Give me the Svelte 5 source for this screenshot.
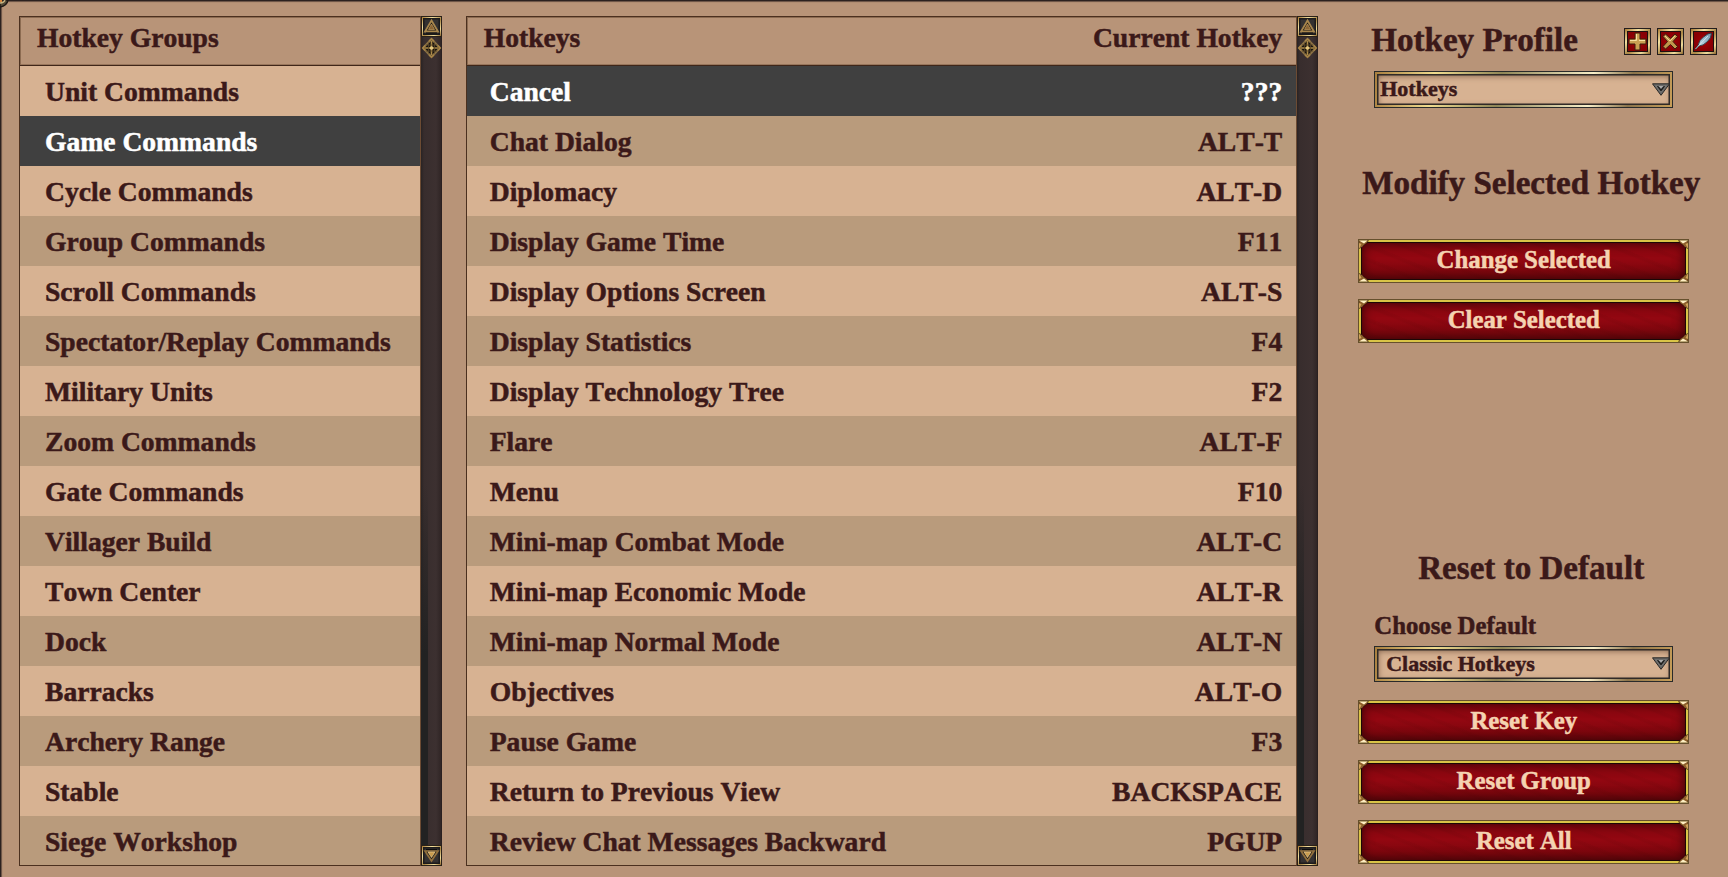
<script lang="ts">
    const groups = [
        'Unit Commands', 'Game Commands', 'Cycle Commands', 'Group Commands',
        'Scroll Commands', 'Spectator/Replay Commands', 'Military Units', 'Zoom Commands',
        'Gate Commands', 'Villager Build', 'Town Center', 'Dock',
        'Barracks', 'Archery Range', 'Stable', 'Siege Workshop'
    ];

    const hotkeys = [
        { name: 'Cancel', key: '???' },
        { name: 'Chat Dialog', key: 'ALT-T' },
        { name: 'Diplomacy', key: 'ALT-D' },
        { name: 'Display Game Time', key: 'F11' },
        { name: 'Display Options Screen', key: 'ALT-S' },
        { name: 'Display Statistics', key: 'F4' },
        { name: 'Display Technology Tree', key: 'F2' },
        { name: 'Flare', key: 'ALT-F' },
        { name: 'Menu', key: 'F10' },
        { name: 'Mini-map Combat Mode', key: 'ALT-C' },
        { name: 'Mini-map Economic Mode', key: 'ALT-R' },
        { name: 'Mini-map Normal Mode', key: 'ALT-N' },
        { name: 'Objectives', key: 'ALT-O' },
        { name: 'Pause Game', key: 'F3' },
        { name: 'Return to Previous View', key: 'BACKSPACE' },
        { name: 'Review Chat Messages Backward', key: 'PGUP' }
    ];

    let selectedGroup = $state(1);
    let selectedHotkey = $state(0);
</script>

{#snippet scrollbar()}
    <div class="scrollbar">
        <svg class="arrow" width="21" height="21" viewBox="0 0 21 21">
            <rect width="21" height="21" fill="#2a2118" />
            <rect x="1" y="1" width="19" height="19" fill="url(#gold)" />
            <rect x="2" y="2" width="17" height="17" fill="#1c1b1b" />
            <rect x="3.500" y="3.500" width="14" height="14" fill="#343131" />
            <path d="M10.500 4.500 L17 15.500 H4 Z" fill="#211b15" stroke="#a8864c" stroke-width="1.800" />
            <path d="M10.500 8 L13.500 13.500 H7.500 Z" fill="#8c6534" stroke="#c29a5c" stroke-width=".7" />
            <path d="M5 17 H16" stroke="#0d0c0c" />
        </svg>
        <svg class="thumb" width="21" height="22" viewBox="0 0 21 22">
            <path d="M10.500 2 L19 11 L10.500 20 L2 11 Z" fill="#17130f" stroke="#8b7144" stroke-width="2" />
            <path d="M10.500 4 V18 M4 11 H17" stroke="#ad8b48" stroke-width="1.600" />
            <path d="M7.500 5.500 V16.500 M13.500 5.500 V16.500 M5 8 H16 M5 14 H16" stroke="#5b4829" stroke-width=".8" />
            <path d="M8 4 L10.500 2 L13 4 M8 18 L10.500 20 L13 18 M4 8.500 L2 11 L4 13.500 M17 8.500 L19 11 L17 13.500" fill="none" stroke="#a78445" stroke-width="1.500" />
            <circle cx="10.500" cy="11" r="1.800" fill="#e3c77e" />
        </svg>
        <svg class="arrow down" width="21" height="21" viewBox="0 0 21 21">
            <rect width="21" height="21" fill="#2a2118" />
            <rect x="1" y="1" width="19" height="19" fill="url(#gold)" />
            <rect x="2" y="2" width="17" height="17" fill="#1c1b1b" />
            <rect x="3.500" y="3.500" width="14" height="14" fill="#343131" />
            <path d="M4 6 H17 L10.500 16 Z" fill="#251d15" stroke="#92703d" stroke-width="1.700" />
            <path d="M7 7 H14 L10.500 12.500 Z" fill="#c99b4d" stroke="#f0d69e" stroke-width=".6" />
            <path d="M5 4.500 H16" stroke="#0d0c0c" />
        </svg>
    </div>
{/snippet}

{#snippet iconFrame()}
    <rect width="27" height="27" fill="#231d1d" />
    <rect x="1" y="1" width="25" height="25" fill="url(#gold)" />
    <rect x="3" y="3" width="21" height="21" fill="#1c1010" />
    <rect x="4" y="4" width="19" height="19" fill="url(#ruby)" />
{/snippet}

{#snippet dropdown(label, inset)}
    <button class="dropdown" class:inset>
        <span>{label}</span>
        <svg width="18" height="13" viewBox="0 0 18 13">
            <path d="M.5 .8 H17.500 L9 12.300 Z" fill="#696969" stroke="#292827" />
            <path d="M4 2.800 H14 L9 9.200 Z" fill="#1d1d1d" stroke="#96948e" stroke-width=".6" />
            <path d="M6.500 3 H11.500 L9 6 Z" fill="#aaa" />
        </svg>
    </button>
{/snippet}

{#snippet redButton(label)}
    <button class="red-button">
        <span>{label}</span>
        {#each ['tl', 'tr', 'bl', 'br'] as corner}
            <svg class="corner {corner}" width="10" height="9" viewBox="0 0 10 9">
                <path d="M0 .5 H9.500 Q8 4 5 5 Q3.500 8 0 8.500 Z" fill="#8d5f2c" stroke="#170b05" stroke-width=".4" />
                <path d="M0 .5 H8.500 L5 3.500 Z" fill="#fff0c4" />
                <path d="M0 3 L2.500 4 L.5 8 H0 Z" fill="#cfa45b" />
            </svg>
        {/each}
    </button>
{/snippet}

<main class="screen">
    <svg class="defs" width="0" height="0">
        <defs>
            <linearGradient id="gold" x1="0" y1="0" x2="1" y2="1">
                <stop offset="0" stop-color="#a67832" />
                <stop offset=".28" stop-color="#f2dfa0" />
                <stop offset=".55" stop-color="#a88443" />
                <stop offset=".8" stop-color="#efdc9d" />
                <stop offset="1" stop-color="#8d652c" />
            </linearGradient>
            <radialGradient id="ruby">
                <stop offset="0" stop-color="#a90006" />
                <stop offset="1" stop-color="#870004" />
            </radialGradient>
            <linearGradient id="feather" x1="1" y1="0" x2="0" y2="1">
                <stop offset="0" stop-color="#6f94ab" />
                <stop offset=".55" stop-color="#a9c8da" />
                <stop offset="1" stop-color="#e1e7e8" />
            </linearGradient>
        </defs>
    </svg>
    <svg class="ornament" width="10" height="9" viewBox="0 0 10 9">
        <path d="M0 0 H8 Q7 6 0 7 Z" fill="#554b38" stroke="#211a16" stroke-width="1.500" />
        <path d="M0 3 Q4 3 5 0" fill="none" stroke="#c7b581" stroke-width="1.300" />
        <rect width="2" height="2" fill="#d9823b" />
    </svg>

    <section class="panel groups">
        <div class="list">
            <header class="list-header"><span>Hotkey Groups</span></header>
            <ul>
                {#each groups as group, i}
                    <li>
                        <button class="row" class:selected={i === selectedGroup} onclick={() => (selectedGroup = i)}>{group}</button>
                    </li>
                {/each}
            </ul>
        </div>
        {@render scrollbar()}
    </section>

    <section class="panel hotkeys">
        <div class="list">
            <header class="list-header"><span>Hotkeys</span><span>Current Hotkey</span></header>
            <ul>
                {#each hotkeys as hotkey, i}
                    <li>
                        <button class="row" class:selected={i === selectedHotkey} onclick={() => (selectedHotkey = i)}>
                            <span>{hotkey.name}</span>
                            <span>{hotkey.key}</span>
                        </button>
                    </li>
                {/each}
            </ul>
        </div>
        {@render scrollbar()}
    </section>

    <aside class="side">
        <div class="profile">
            <h2>Hotkey Profile</h2>
            <div class="profile-actions">
                <button aria-label="Add profile">
                    <svg width="27" height="27" viewBox="0 0 27 27">
                        {@render iconFrame()}
                        <path d="M11 5 H16 V11 H22 V16 H16 V22 H11 V16 H5 V11 H11 Z" fill="#c9a052" stroke="#3a1d0d" stroke-width="1" />
                        <path d="M12.500 6 V12.500 H6 M15 12.500 H21" fill="none" stroke="#f5dfa0" />
                    </svg>
                </button>
                <button aria-label="Delete profile">
                    <svg width="27" height="27" viewBox="0 0 27 27">
                        {@render iconFrame()}
                        <path d="M6 8.500 L8.500 6 L13.500 10.500 L18 6 L20.500 8.500 L16 13.500 L20.500 18.500 L18 21 L13.500 16.500 L8.500 21 L6 18.500 L10.500 13.500 Z" fill="#c1964b" stroke="#3a1d0d" />
                        <path d="M8 8 L13 13 L18 8" fill="none" stroke="#f7dfa1" stroke-width=".9" />
                    </svg>
                </button>
                <button aria-label="Rename profile">
                    <svg width="27" height="27" viewBox="0 0 27 27">
                        {@render iconFrame()}
                        <path d="M5 21.500 L8 17.500 Q9 12 14 8.500 Q18 5 21.500 5 Q21.500 10 17.500 13.500 Q13 18 9 18 Z" fill="url(#feather)" stroke="#29333b" stroke-width=".9" />
                        <path d="M5.500 21 L18 8" stroke="#d9e8ed" stroke-width=".8" />
                    </svg>
                </button>
            </div>
        </div>
        {@render dropdown('Hotkeys', false)}

        <h2 class="modify-title">Modify Selected Hotkey</h2>
        <div class="buttons">
            {@render redButton('Change Selected')}
            {@render redButton('Clear Selected')}
        </div>

        <h2 class="reset-title">Reset to Default</h2>
        <h3>Choose Default</h3>
        {@render dropdown('Classic Hotkeys', true)}
        <div class="buttons reset">
            {@render redButton('Reset Key')}
            {@render redButton('Reset Group')}
            {@render redButton('Reset All')}
        </div>
    </aside>
</main>

<style>
    :global(body) {
        margin: 0;
        overflow: hidden;
        background: #b89478;
    }
    .screen {
        box-sizing: border-box;
        position: relative;
        display: flex;
        width: 1728px;
        height: 877px;
        padding: 15px 0 0 18px;
        border-top: 1px solid #2b211f;
        border-left: 1px solid #2b211f;
        box-shadow: inset 1px 1px 1px #664f43;
        background: #b89478;
        color: #3b1919;
        font-family: "Liberation Serif", "Times New Roman", serif;
        font-size: 27.6px;
        font-weight: bold;
        font-kerning: none;
        -webkit-text-stroke: 0.5px;
    }
    .defs {
        position: absolute;
    }
    .ornament {
        position: absolute;
        top: -1px;
        left: -1px;
    }
    button {
        padding: 0;
        border: 0;
        background: none;
        color: inherit;
        font: inherit;
        font-kerning: none;
    }
    h2, h3, ul {
        margin: 0;
        padding: 0;
    }
    .panel {
        display: flex;
        height: 850px;
    }
    .groups {
        width: 423px;
        margin-right: 24px;
    }
    .hotkeys {
        width: 853px;
    }
    .list {
        box-sizing: border-box;
        flex: 1;
        height: 850px;
        border: 1px solid #4b301f;
        border-right-color: #6c4b33;
        box-shadow: inset 1px 1px 0 #8c6b51;
    }
    .list-header {
        box-sizing: border-box;
        display: flex;
        align-items: center;
        justify-content: space-between;
        height: 49px;
        padding: 0 14px 7px 17px;
        border-bottom: 1px solid #3f2619;
        box-shadow: inset 1px 1px 0 #8c6b51, inset 0 -1px 0 #98765c;
    }
    ul {
        height: 799px;
        overflow: hidden;
        list-style: none;
    }
    .row {
        box-sizing: border-box;
        display: flex;
        align-items: center;
        justify-content: space-between;
        width: 100%;
        height: 50px;
        padding: 1px 14px 0 25px;
        background: #b99b7c;
        text-align: left;
        white-space: nowrap;
    }
    .hotkeys .row {
        padding-left: 23px;
    }
    li:nth-child(odd) .row {
        background: #d7b292;
    }
    li .row.selected,
    li:nth-child(odd) .row.selected {
        background: #404040;
        color: #fff;
    }
    .scrollbar {
        display: flex;
        flex-direction: column;
        width: 21px;
        background: linear-gradient(#0000 55%, #222 75%) 0 0 / 7px 100% no-repeat, linear-gradient(90deg, #292323 0, #382d2d 3px, #3c3030 15px, #302525 20px, #241b1b);
    }
    .down {
        margin-top: auto;
    }
    .side {
        display: flex;
        flex-direction: column;
        width: 370px;
        margin-left: 40px;
    }
    .side h2 {
        font-size: 33.1px;
        line-height: 38px;
        white-space: nowrap;
    }
    .profile {
        display: flex;
        align-items: center;
        justify-content: space-between;
        height: 50px;
        padding: 0 11px 0 13px;
    }
    .profile h2 {
        margin-top: -2px;
    }
    .profile-actions {
        display: flex;
        gap: 6px;
    }
    .profile-actions button,
    .profile-actions svg {
        display: block;
    }
    .dropdown {
        box-sizing: border-box;
        display: flex;
        align-items: center;
        justify-content: space-between;
        width: 299px;
        height: 37px;
        margin: 5px 0 0 16px;
        padding: 0 0 1px 3px;
        border: 3px solid;
        border-image: linear-gradient(100deg, #a67c3c, #f0dc8f 20%, #8f8657 42%, #f8eec8 72%, #8b744c 85%, #c99f58) 3;
        outline: 1px solid #292a2a;
        outline-offset: -1px;
        box-shadow: inset 0 0 0 1.5px #302a27, inset 1px 2px 6px #80614a;
        background: #d7b292;
        font-size: 22px;
    }
    .dropdown.inset {
        height: 36px;
        margin-top: 6px;
        padding-left: 9px;
    }
    .modify-title {
        margin: 56px 0 0 4px;
    }
    .buttons {
        display: flex;
        flex-direction: column;
        gap: 16px;
        margin-top: 37px;
    }
    .red-button {
        box-sizing: border-box;
        position: relative;
        width: 331px;
        height: 44px;
        padding-bottom: 2px;
        border: 1px solid #66502d;
        background: repeating-linear-gradient(22deg, #0000 0 8px, #30000010 10px, #3000000a 13px), linear-gradient(#8b0710, #930711 45%, #6d060b);
        box-shadow: inset 0 0 0 2px #d9c447, inset 0 0 0 3px #1c0706, inset 0 0 12px 3px #320306;
        color: #f5d3b1;
        font-size: 24.8px;
    }
    .corner {
        position: absolute;
        top: 0;
        left: 0;
    }
    .tr {
        left: auto;
        right: 0;
        transform: scaleX(-1);
    }
    .bl {
        top: auto;
        bottom: 0;
        transform: scaleY(-1);
    }
    .br {
        top: auto;
        bottom: 0;
        left: auto;
        right: 0;
        transform: scale(-1);
    }
    .reset-title {
        margin: 206px 0 0 60px;
    }
    h3 {
        margin: 25px 0 0 16px;
        font-size: 24.8px;
        line-height: 28px;
    }
    .buttons.reset {
        margin-top: 18px;
    }
</style>
